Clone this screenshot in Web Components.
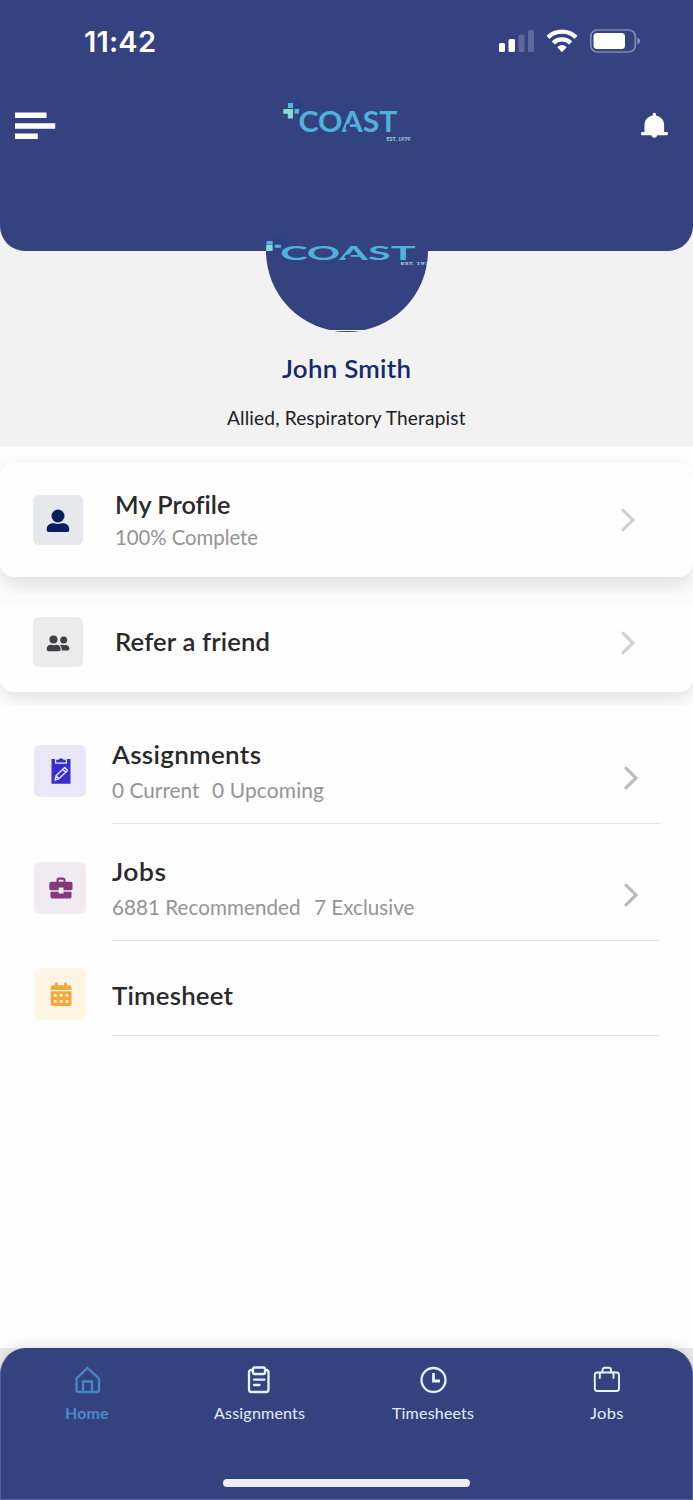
<!DOCTYPE html>
<html lang="en">
<head>
<meta charset="utf-8">
<title>Coast Home</title>
<style>
html,body{margin:0;padding:0}
body{width:693px;height:1500px;overflow:hidden;background:#fefefe;font-family:Lato,"Open Sans",sans-serif;color:#2b2b2d}
</style>
</head>
<body>
<coast-app></coast-app>
<script>
const define=(name,html,setup)=>{
  const t=document.createElement('template');t.innerHTML=html;
  customElements.define(name,class extends HTMLElement{
    connectedCallback(){
      if(this.shadowRoot)return;
      this.attachShadow({mode:'open'}).appendChild(t.content.cloneNode(true));
      if(setup)setup(this,this.shadowRoot);
    }
  });
};

/* Text widened to a given line width, partly by stretch and partly by tracking */
define('tracked-text',`<style>:host{display:block;white-space:nowrap}span{display:inline-block;white-space:nowrap;transform-origin:0 50%}</style><span><slot></slot></span>`,(el,r)=>{
  const s=r.querySelector('span'),w=parseFloat(el.getAttribute('w'));
  el.style.width=w+'px';
  const fit=()=>{s.style.letterSpacing='0px';s.style.transform='none';
    const n=el.textContent.length,nat=s.getBoundingClientRect().width;
    if(n>1&&nat){const k=Math.pow(w/nat,.65),ls=(w/k-nat)/(n-1);
      s.style.letterSpacing=ls+'px';s.style.marginRight=-ls+'px';s.style.transform='scaleX('+k+')'}};
  fit();requestAnimationFrame(fit);
});

define('coast-logo',`<style>:host{display:block}svg{display:block;width:100%;height:100%}</style>
<svg viewBox="283 97 128 44" preserveAspectRatio="none">
<path fill="#274187" d="M295 98h4v5h4.500v4.500h-8.500z"/>
<path fill="#54b4dd" d="M288 103h5v5h-5zM294.500 109h4.500v4.700h-4.500z"/>
<path fill="#85dad5" d="M283.300 109h9.700v9.500h-5.200v-4.800h-4.500z"/>
<text x="298.500" y="132.300" font-family="Lato" font-weight="700" font-size="28.500" textLength="99" lengthAdjust="spacingAndGlyphs" fill="#4fb2dc">COAST</text>
<path fill="#34437f" d="M346.800 124.100h3.200v5.300h-5z"/>
<text x="329" y="140.700" font-family="Lato" font-size="5.500" textLength="55" fill="#2b4385">MEDICAL SERVICE</text>
<text x="386.500" y="140.700" font-family="Lato" font-weight="700" font-size="5.500" textLength="24" lengthAdjust="spacingAndGlyphs" fill="#a4d9e2">EST. 1979</text>
</svg>`);

define('status-bar',`<style>:host{display:flex;height:84px;padding:0 53px 0 84px;justify-content:space-between;box-sizing:border-box}
tracked-text{font:600 28.500px/34px Inter,sans-serif;color:#fff;margin-top:25px}svg{margin-top:26px}</style>
<tracked-text w="72">11:42</tracked-text>
<svg width="142" height="30" viewBox="498 26 142 30" fill="#fff">
<rect x="499" y="43" width="6" height="9" rx="1.500"/><rect x="508.500" y="39" width="6.500" height="13" rx="1.500"/>
<g opacity=".2"><rect x="518.500" y="34.500" width="6" height="17.500" rx="1.500"/><rect x="528" y="30" width="6" height="22" rx="1.500"/></g>
<g fill="none" stroke="#fff" stroke-width="4.300"><path d="M548 37.400a20 20 0 0 1 28 0"/><path d="M553.300 43a12.400 12.400 0 0 1 17.400 0"/></g>
<path d="M557.300 47.200q4.700-4.200 9.400 0L562 52.200z"/>
<rect x="590.800" y="30" width="44.500" height="22" rx="6.500" fill="none" stroke="#8089b0" stroke-width="1.700"/>
<rect x="593.500" y="33" width="31.500" height="16" rx="3.500"/><path d="M637.500 37.500q2.500 1 2.500 3.500t-2.500 3.500z" fill="#8f98ba"/></svg>`);

define('app-header',`<style>:host{display:block;height:251px;box-sizing:border-box;background:#34437f;border-radius:0 0 25px 25px}
.bar{display:grid;grid-template-columns:1fr 128px 1fr;height:84px;align-items:start;padding:0 25px 0 15px}
.menu{margin-top:28px}.bell{margin-top:28px;justify-self:end}coast-logo{width:128px;height:44px;margin-top:13px;margin-left:5.500px}</style>
<status-bar></status-bar>
<div class="bar"><svg class="menu" width="41" height="28" fill="#fff"><path d="M0 .5h31.500v5.500H0zM0 11.200h40.200v5.500H0zM0 21.500h22.800v5.500H0z"/></svg>
<coast-logo></coast-logo>
<svg class="bell" width="27" height="27" viewBox="0 0 27 27" fill="#fff"><path d="M11.700 1.700a1.800 1.800 0 0 1 3.200 0v1.800c5 1 8.200 4.600 8.200 9.500v7h2.400a1.500 1.500 0 0 1 0 3.200H16.200c-.2 3.300-5.600 3.300-5.800 0H1.200a1.500 1.500 0 0 1 0-3.200h2.300V13c0-4.900 3.200-8.500 8.200-9.500z"/></svg></div>`);

define('profile-summary',`<style>:host{display:flex;flex-direction:column;align-items:center;height:196px;background:#f2f2f2}
.wrap{width:693px;height:82px;display:flex;justify-content:center}
.pic{box-sizing:border-box;width:162px;height:162px;margin:-81px 0 0 0;border-radius:50%;overflow:hidden;background:linear-gradient(#34437f 160px,#f2f2f2 160px,#f2f2f2 161px,#34437f 161px)}
coast-logo{width:175px;height:28.600px;margin:66.500px 0 0 -6.500px}
.name{font:600 25px/30px Lato;color:#14286b;margin-top:20px}.role{font:400 18.500px/24px Lato;color:#202022;margin-top:22.500px}</style>
<div class="wrap"><div class="pic"><coast-logo></coast-logo></div></div>
<tracked-text class="name" w="129">John Smith</tracked-text><tracked-text class="role" w="238.500">Allied, Respiratory Therapist</tracked-text>`);

define('chevron-icon',`<style>:host{display:block}svg{display:block}</style><svg width="16" height="24" fill="none" stroke="currentColor" stroke-width="3.200" stroke-linecap="round"><path d="M3 2.200 13 12l-10 9.800"/></svg>`);

define('icon-tile',`<style>:host{display:grid;place-items:center;width:var(--s,52px);height:var(--s,52px);border-radius:6px}</style><slot></slot>`);

define('link-card',`<style>:host{display:grid;grid-template-columns:50px 1fr 16px;column-gap:32.500px;align-items:center;box-sizing:border-box;padding:0 57px 0 32.500px;border-radius:14px;background:#fefefe;box-shadow:0 8px 20px rgba(0,0,0,.13)}
chevron-icon{color:#d2d2d2}.txt{display:block}</style><slot name="icon"></slot><div class="txt"><slot></slot></div><chevron-icon></chevron-icon>`);

define('card-group',`<style>:host{display:flex;flex-direction:column;gap:16px;height:259px;padding-top:16px;box-sizing:border-box;overflow:hidden}
.one,.two{flex:none}.one{height:114px}.two{height:99px;background:linear-gradient(#f9f9f9,#fefefe 14px);box-shadow:0 8px 16px rgba(0,0,0,.1)}
icon-tile{--s:50px}.two icon-tile{margin-top:-1px}
.t{font:600 25px/30px Lato;color:#29292b;padding-bottom:1px;transform:translateY(-1px)}.s{font:400 20.500px/26px Lato;color:#949494;margin-top:3px}</style>
<link-card class="one"><icon-tile slot="icon" style="background:#e6e8ee"><svg width="24" height="24" viewBox="0 0 24 24" fill="#0a1e5e" style="margin:2px 0 0 1px"><circle cx="12" cy="7" r="6.500"/><path d="M.7 20.500c0-4 2.500-6.300 6.300-6.300 2 0 3 .7 5 .7s3-.7 5-.7c3.800 0 6.300 2.300 6.300 6.300v.6q0 2-2 2H2.700q-2 0-2-2z"/></svg></icon-tile>
<tracked-text class="t" w="115">My Profile</tracked-text><tracked-text class="s" w="143">100% Complete</tracked-text></link-card>
<link-card class="two"><icon-tile slot="icon" style="background:#ebebeb"><svg width="24" height="17" viewBox="0 0 24 17" fill="#404042" style="margin:2px 0 0 1px"><circle cx="7.500" cy="4.500" r="4"/><circle cx="17.700" cy="5" r="3.500"/><path d="M.7 14.200c0-3 1.600-4.500 4.100-4.500 1.400 0 1.700.5 2.900.5s1.500-.5 2.900-.5c2.500 0 4.100 1.500 4.100 4.500q0 2.100-2 2.100H2.700q-2 0-2-2.100z"/><path d="M14 10.200c1-.6 2-.4 3.900 0 3.400-.7 5.500.8 5.500 3.500 0 1.200-.5 1.700-1.500 1.700h-6.200c.2-2.200-.3-3.900-1.700-5.200z"/></svg></icon-tile>
<tracked-text class="t" w="155">Refer a friend</tracked-text></link-card>`);

define('menu-row',`<style>:host{display:grid;grid-template-columns:52px 1fr;column-gap:26px;padding:0 33px 0 34px;height:117px}
.body{display:flex;justify-content:space-between;border-bottom:1.500px solid #e2e2e2;box-sizing:border-box}
.txt{display:block;padding-top:var(--tt,31.500px)}chevron-icon{color:#bcbcbc;margin:58.500px 21px 0 0}:host([plain]) chevron-icon{display:none}
.tile{padding-top:var(--it,38px)}</style><div class="tile"><slot name="icon"></slot></div><div class="body"><div class="txt"><slot></slot></div><chevron-icon></chevron-icon></div>`);

define('menu-list',`<style>:host{display:block;padding-top:1px;height:642px;box-sizing:border-box}
.t{font:600 25px/30px Lato;color:#29292b}.s{display:flex;font:400 20.500px/26px Lato;color:#949494;margin-top:8.500px}icon-tile svg{margin-left:1.500px}</style>
<menu-row><icon-tile slot="icon" style="background:#eae8f8"><svg width="20" height="26" viewBox="0 0 20 26"><path fill="#3a2dce" d="M.5 1H4v4.800h12V1h3.500v24.700H.5z"/><path fill="#3a2dce" d="M5.200 1.700h2.300Q10-1.200 12.500 1.700h2.300v2.800H5.200z"/><g fill="none" stroke="#eeecfb" stroke-width="1.300" stroke-linejoin="round"><path d="M4 22.200 5 17.800l8.700-8.300 2.900 3-8.800 8.200zM11.700 11.300l3 3M5 17.800l2.800 2.900"/></g></svg></icon-tile>
<tracked-text class="t" w="149">Assignments</tracked-text><div class="s"><tracked-text w="87.500">0 Current</tracked-text><tracked-text w="112" style="margin-left:12.500px">0 Upcoming</tracked-text></div></menu-row>
<menu-row><icon-tile slot="icon" style="background:#f1eaf1"><svg width="24" height="22" viewBox="0 0 24 22"><path fill="#813b79" fill-rule="evenodd" d="M7.500 4.800V3q0-2.500 2.500-2.500h4.200q2.300 0 2.300 2.500v1.800h5q2 0 2 2v4.700q0 1.700-1.700 1.700h-7.300v-2.600H9.700v2.600H2q-1.700 0-1.700-1.700V6.800q0-2 2-2zM9.700 4.800h4.700V2.700H9.700z"/><path fill="#813b79" d="M1.500 14.700h8.200v1.700h4.800v-1.700h8v5q0 1.900-2 1.900h-17q-2 0-2-1.900z"/></svg></icon-tile>
<tracked-text class="t" w="54">Jobs</tracked-text><div class="s"><tracked-text w="188.500">6881 Recommended</tracked-text><tracked-text w="100.500" style="margin-left:13.500px">7 Exclusive</tracked-text></div></menu-row>
<menu-row plain style="--tt:38.500px;--it:27px;height:95px"><icon-tile slot="icon" style="background:#fef5e5"><svg width="22" height="25" viewBox="0 0 22 25" fill="#f2a83a" style="margin-top:1px"><path d="M.7 8V5.500q0-2.300 2.200-2.300H5V1.700q0-1.500 1.500-1.500T8 1.700v1.500h6V1.700q0-1.500 1.500-1.500T17 1.700v1.500h2.300q2.200 0 2.200 2.300V8z"/><path fill-rule="evenodd" d="M.7 9.300h20.800v12.500q0 2.300-2.200 2.300H2.900q-2.200 0-2.200-2.300zM3.800 12v2.800h2.800V12zm6 0v2.800h2.800V12zm5.800 0v2.800h2.800V12zM3.800 18v2.800h2.800V18zm6 0v2.800h2.800V18zm5.800 0v2.800h2.800V18z"/></svg></icon-tile>
<tracked-text class="t" w="121">Timesheet</tracked-text></menu-row>`);

define('nav-item',`<style>:host{display:flex;flex-direction:column;align-items:center;flex:1;font:400 15.500px/20px Lato;color:#e2edf7}::slotted(svg){display:block;height:28px}.l{margin-top:9px}</style><slot name="icon"></slot><div class="l"><slot></slot></div>`);

define('bottom-nav',`<style>:host{display:block;height:152px;background:#ebebeb}
nav{height:152px;box-sizing:border-box;border:1px solid #56639a;border-top-color:#303e7a;border-radius:26px 26px 0 0;background:#34437f;display:flex;flex-direction:column;justify-content:space-between;align-items:center;box-shadow:0 -2px 14px rgba(0,0,0,.13)}
.items{display:flex;width:693px;padding-top:17px}.bar{width:247px;height:8px;border-radius:4px;background:#eee;margin-bottom:12px}
svg{fill:none;stroke:#e4f5fa;stroke-width:2.300;stroke-linejoin:round;stroke-linecap:round}</style>
<nav><div class="items">
<nav-item style="color:#4c8bc9"><svg slot="icon" width="28" height="28" style="stroke:#4389c8"><path d="M3.500 12.500 14.500 2 26 12.500v11q0 2.500-2.200 2.500H5.500q-2 0-2-2zM10 26V15.500h9V26"/></svg><tracked-text w="43.500" style="font-weight:700">Home</tracked-text></nav-item>
<nav-item><svg slot="icon" width="28" height="28"><rect x="7" y="1.500" width="12" height="6.500" rx="1.500"/><path d="M7 4H5.500Q3 4 3 6.500v17q0 2.500 2.500 2.500H20q2.500 0 2.500-2.500v-17Q22.500 4 20 4h-1M8 13.700H18.500M8 19H13.500"/></svg><tracked-text w="91">Assignments</tracked-text></nav-item>
<nav-item><svg slot="icon" width="28" height="28"><circle cx="14.500" cy="14" r="12"/><path stroke-width="2.800" stroke-linecap="butt" stroke-linejoin="miter" d="M14.500 7v8h6.500"/></svg><tracked-text w="82">Timesheets</tracked-text></nav-item>
<nav-item><svg slot="icon" width="28" height="28" style="stroke-width:1.900"><rect x="2.800" y="6.500" width="24.200" height="18.500" rx="2.500"/><path d="M7.800 12V6.500M21.500 12V6.500M10.500 6.500V4q0-2.200 2.200-2.200h4Q19 1.800 19 4v2.500"/></svg><tracked-text w="33.500">Jobs</tracked-text></nav-item>
</div><div class="bar"></div></nav>`);

define('coast-app',`<style>:host{display:block;width:693px;height:1500px;overflow:hidden}.top{background:#f2f2f2}</style>
<div class="top"><app-header></app-header></div><profile-summary></profile-summary><card-group></card-group><menu-list></menu-list><bottom-nav></bottom-nav>`);
</script>
</body>
</html>
